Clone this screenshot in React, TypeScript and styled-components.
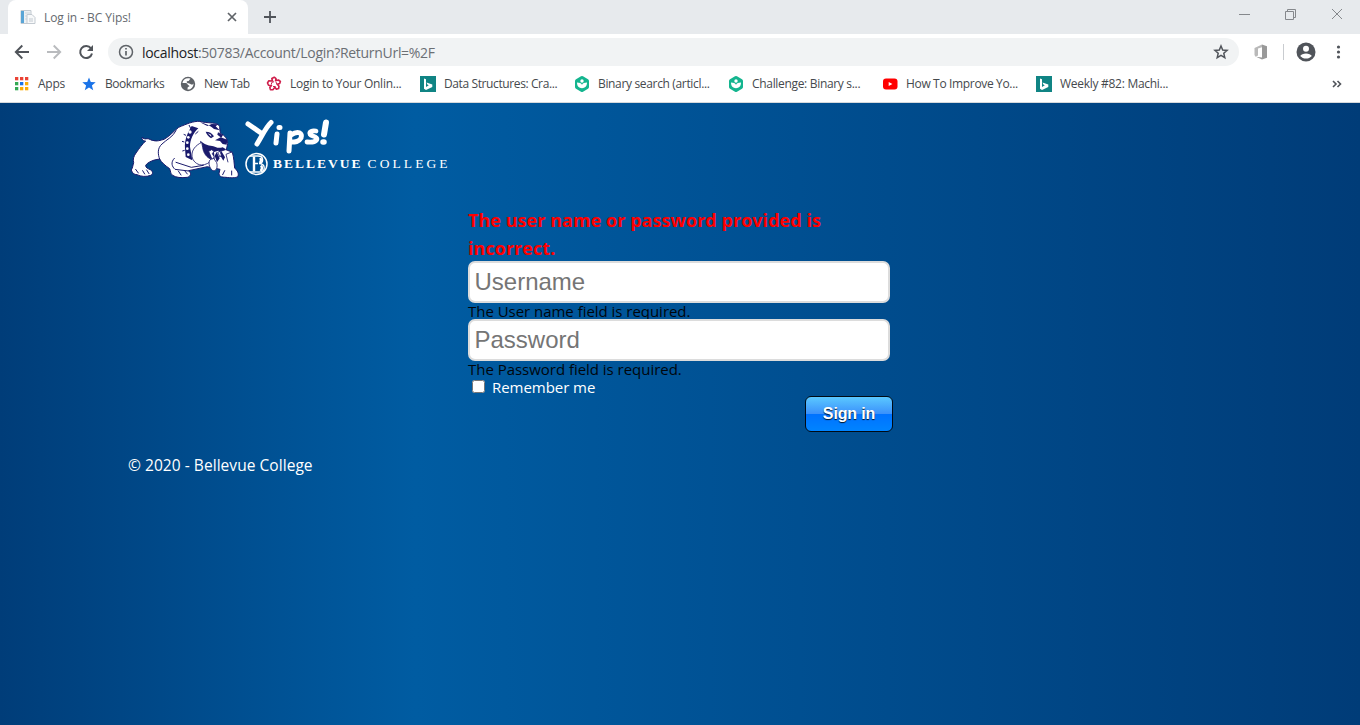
import React from 'react';
import styled, { createGlobalStyle } from 'styled-components';

const ui = '"Open Sans", "Noto Sans", sans-serif';

const Global = createGlobalStyle`
  * { box-sizing: border-box; }
  html, body { margin: 0; padding: 0; }
  body { overflow: hidden; font-family: ${ui}; }
`;

const Window = styled.div`
  display: flex;
  flex-direction: column;
  width: 1360px;
  height: 725px;
  overflow: hidden;
  background: #fff;
`;

const Label = styled.span<{ $ls?: number }>`
  letter-spacing: ${(p) => p.$ls ?? 0}px;
  white-space: nowrap;
`;

const TabStrip = styled.div`
  display: flex;
  height: 34px;
  flex: none;
  background: #e7eaed;
  padding-left: 8px;
`;

const Tab = styled.div`
  display: flex;
  align-items: center;
  width: 240px;
  height: 34px;
  padding: 0 10px 0 12px;
  background: #fff;
  border-radius: 8px 8px 0 0;
  color: #65696e;
  font-size: 12px;
  & > span { flex: 1; margin-left: 8px; }
`;

const NewTab = styled.div`
  display: flex;
  align-items: center;
  margin-left: 15px;
`;

const WindowButtons = styled.div`
  display: flex;
  gap: 35px;
  height: 28px;
  align-items: center;
  margin-left: auto;
  padding-right: 17px;
`;

const Toolbar = styled.div`
  display: flex;
  align-items: center;
  height: 36px;
  flex: none;
  padding: 0 0 0 14px;
`;

const NavButtons = styled.div`
  display: flex;
  gap: 16px;
  width: 94px;
`;

const Address = styled.div`
  display: flex;
  align-items: center;
  width: 1131px;
  height: 28px;
  padding: 0 10px;
  border-radius: 14px;
  background: #f1f3f4;
  color: #6b6f74;
  font-size: 14px;
  & > span { flex: 1; margin-left: 8px; }
  b { font-weight: 400; color: #202124; }
`;

const Actions = styled.div`
  display: flex;
  align-items: center;
  margin-left: 14px;
`;

const Divider = styled.div`
  width: 1px;
  height: 16px;
  margin: 0 12px 0 14px;
  background: #c9ccd0;
`;

const Bookmarks = styled.div`
  display: flex;
  align-items: center;
  height: 33px;
  flex: none;
  padding: 0 18px 5px 13px;
  border-bottom: 1px solid #d6d9dc;
  color: #45494d;
  font-size: 12px;
`;

const Bookmark = styled.div<{ $w: number }>`
  display: flex;
  align-items: center;
  gap: 8px;
  width: ${(p) => p.$w}px;
  flex: none;
  svg { flex: none; }
`;

const More = styled.div`
  display: flex;
  margin-left: auto;
`;

const Page = styled.main`
  flex: 1;
  padding: 15px 128px 0;
  background: linear-gradient(to right, #003d79 0%, #005ca2 30.5%, #003c78 100%);
  color: #fff;
  font-size: 16px;
`;

const Brand = styled.header`
  display: flex;
  height: 91px;
`;

const BrandText = styled.div`
  display: flex;
  flex-direction: column;
  margin-left: 4px;
`;

const College = styled.div`
  display: flex;
  align-items: center;
  gap: 5px;
  height: 24px;
  margin-top: -2px;
  font-family: "Liberation Serif", serif;
  font-size: 13.5px;
  line-height: 22px;
  span { margin-top: -1px; }
`;

const Form = styled.form`
  width: 425px;
  margin-left: 340px;
  display: flex;
  flex-direction: column;
`;

const ErrorTitle = styled.h3`
  margin: -3px 0 0;
  height: 55px;
  color: #f00;
  font-size: 18px;
  letter-spacing: 0.04px;
  font-weight: 700;
  line-height: 28px;
`;

const Field = styled.input`
  width: 422px;
  height: 42px;
  padding: 0 4.5px;
  border: 2px solid #dcdcdc;
  border-radius: 7px;
  background: #fff;
  font: 24px "Liberation Sans", sans-serif;
  outline: none;
  &::placeholder { color: #757575; opacity: 1; }
`;

const Validation = styled.div`
  height: 16px;
  color: #00060c;
  font-size: 15px;
  letter-spacing: -0.03px;
  line-height: 17px;
`;

const Remember = styled.label`
  display: flex;
  align-items: center;
  height: 19px;
  font-size: 15px;
  input { width: 13px; height: 13px; margin: 1px 7px 2px 4px; }
`;

const SignIn = styled.button`
  align-self: flex-end;
  width: 88px;
  height: 36px;
  padding: 0;
  border: 1px solid #000a14;
  border-radius: 6px;
  background: linear-gradient(#5bc8ff 0%, #3a90fb 50%, #0072ff 50%, #0084ff 100%);
  color: #fff;
  font: bold 16px/34px "Liberation Sans", sans-serif;
  letter-spacing: -0.15px;
  text-shadow: 0 1px 1px #012;
`;

const Footer = styled.footer`
  margin-top: 21px;
  font-size: 15.5px;
  letter-spacing: 0.05px;
  line-height: 25px;
`;

const Bing = () => (
  <svg width="16" height="16" viewBox="0 0 16 16">
    <path fill="#108484" d="M0 0h16v16H0z" />
    <path fill="#fff" d="M4 2.500l2 .8v7.600l2.800-1.600-1.500-.7-.8-2 5.800 2v2.300L6 14l-2-1.200z" />
  </svg>
);

const Khan = () => (
  <svg width="16" height="16" viewBox="0 0 16 16">
    <path fill="#14b58f" d="M7 .3a2 2 0 0 1 2 0l5 2.900a2 2 0 0 1 1 1.700v6.200a2 2 0 0 1-1 1.700l-5 2.900a2 2 0 0 1-2 0l-5-2.900a2 2 0 0 1-1-1.700V4.900a2 2 0 0 1 1-1.700z" />
    <circle cx="8" cy="5" r="1.700" fill="#fff" />
    <path fill="#fff" d="M3 6.500c2.600 0 4.300.8 5 2.300 .7-1.500 2.400-2.300 5-2.300 0 3.600-2 5.700-5 5.700S3 10.100 3 6.500z" />
  </svg>
);

const AppsIcon = () => (
  <svg width="17" height="14" viewBox="0 0 17 14">
    {['#ea4335', '#ea4335', '#ea4335', '#34a853', '#1a73e8', '#fbac05', '#34a853', '#fbac05', '#fbac05'].map((c, i) => (
      <rect key={i} x={2 + (i % 3) * 5} y={Math.floor(i / 3) * 5} width="3.300" height="3.300" fill={c} />
    ))}
  </svg>
);

const StarIcon = () => (
  <svg width="16" height="16" viewBox="0 0 16 16">
    <path fill="#1a73e8" d="M8 1.500l1.800 4.500 4.900.3-3.800 3.100 1.300 4.800L8 11.600l-4.200 2.600 1.300-4.800L1.300 6.300 6.200 6z" />
  </svg>
);

const Globe = () => (
  <svg width="16" height="16" viewBox="0 0 16 16">
    <circle cx="8" cy="8" r="7.200" fill="#5f6368" />
    <path fill="#fff" d="M13.500 7.200c-.4 1.300-1.500 1.500-2.500 1.400-.5-.8-1.600-1.300-2.600-1.400-1.400 0-2.100-.8-1.500-1.900l1.800-.4c.5-.8 1.200-1.400 1.800-2.100C6.600 1.200 3 3.500 2.400 7h3.200c1.500 0 2 1 2.300 1.900 1.100.1 1.600.8 1.400 1.600l-1.500.6-.4 2.500c3.700.2 6.300-2.900 6.100-6.400z" />
  </svg>
);

const Blossom = () => (
  <svg width="16" height="16" viewBox="0 0 16 16" fill="none" stroke="#cf1f4b" strokeWidth="1.600" strokeLinejoin="round">
    <path d="M6.500 5L5.800 2.500 8.300 1.200 10 2.600 9.600 4.800l2.800-.8 2 1.500-.7 2-2.400.7 1.700 2-.4 2.300-2.200.7-1.500-2-2 2.500-2.500-.1-.6-2.200 1.700-1.900-3-.3L1.500 7l1.200-2.200z" />
    <path d="M5.500 6.500l2.500-.8M10 6l1 2.500M9.500 10.500H7M5.500 8.500V7" strokeWidth="1" />
  </svg>
);

const YouTube = () => (
  <svg width="16" height="16" viewBox="0 0 16 16">
    <rect x="1" y="2.500" width="14.500" height="11" rx="3" fill="#f00" />
    <path d="M6.700 5.900v4.200L10.400 8z" fill="#fff" />
  </svg>
);

const Bulldog = () => (
  <svg width="113" height="64" viewBox="24 24 339 192">
    <g fill="#fff" stroke="#1a1a6c" strokeWidth="3" strokeLinejoin="round" strokeLinecap="round">
      <path d="M102 92C95 93 88 85 81 86 76 88 68 86 67 81 64 88 70 93 77 93 67 102 58 115 48 129 41 139 38 148 41 158 38 168 38 174 34 180 37 190 43 194 51 194 62 200 80 201 92 196 101 192 98 183 91 179 84 176 77 174 77 166 82 158 92 154 103 150L119 147C124 157 136 167 149 176 153 184 150 190 158 196 168 203 184 204 202 202 214 198 214 189 206 182L262 170 300 178 297 190C299 203 307 201 318 202 331 204 348 204 353 200 358 190 352 182 344 174 342 158 342 144 337 127L319 120 323 100C323 88 315 76 301 70L299 53C300 43 285 39 274 39 260 37 250 38 240 34 219 33 200 42 176 52 158 67 147 80 132 88 121 91 110 95 102 92z" />
      <path d="M168 62C160 80 138 90 126 102 112 114 113 132 119 147M163 145C151 157 156 170 165 178L206 183M168 157L214 172 250 166" fill="none" />
      <path d="M68 182l6 10M80 180l7 11M175 183l8 12M193 181l9 11M314 182l-6 12M335 183v12M47 178l8 11" fill="none" />
    </g>
    <g fill="#1a1a6c">
      <path d="M215 48C203 68 193 90 195 115L197 141 217 151 210 110C210 90 220 68 235 55z" />
      <path d="M240 37C258 41 274 49 282 57L299 61 287 49 295 43 275 42 262 48zM257 65C269 65 275 69 282 79L273 85C266 79 260 74 257 65zM294 67l15 8-5 8-12-9z" />
      <path d="M285 91l17-9 20 7-2 15-12-2-8-9z" />
      <path d="M240 92C251 99 257 105 272 107 288 109 292 117 308 112L318 118 305 127 295 122 282 126 284 148 274 158C263 146 252 135 248 117 240 110 243 101 240 92z" />
      <path d="M290 126l9 19-8 12-7-20zM307 122l10 15-7 15-12-20z" />
    </g>
    <g fill="#fff" stroke="#1a1a6c" strokeWidth="2.500">
      <path d="M245 97C227 106 214 120 216 139 218 153 230 164 244 165 258 165 270 158 275 148 261 144 250 130 248 112z" />
      <path d="M273 147C262 154 268 174 277 181 289 187 294 170 290 158L281 145z" />
      <path d="M266 124l9-5 7 5-5 7 6 10-7 7zM293 127l7-3 4 11-4 6zM304 123l13-4 18 7-17 7 6 24" />
    </g>
    <path d="M263 70l10 4 1 6z" fill="#fff" />
    <g fill="#fff">
      <circle cx="210" cy="66" r="5" /><circle cx="205" cy="82" r="4" /><circle cx="202" cy="98" r="4" /><circle cx="202" cy="116" r="4" /><circle cx="205" cy="134" r="4" />
    </g>
    <path d="M213 57l-6-12M198 76l-7-3M193 96l-7-2M194 121l-7 2M226 72l9-8" stroke="#1a1a6c" strokeWidth="3" />
  </svg>
);

const YipsMark = () => (
  <svg width="96" height="36" viewBox="0 0 96 36" fill="none" stroke="#fff" strokeLinecap="round" strokeLinejoin="round" strokeWidth="5">
    <path strokeWidth="5" d="M3 6l13 9M26 4.500C21 9 17 18 12 26" />
    <path d="M32 16l-1 9M34 9.500h1" />
    <path strokeWidth="5" d="M45 15l-1 18M46 17c7-5 12-2 10 3-2 4-6 4-10 4" />
    <path strokeWidth="4.800" d="M71 13c-6-1-9 3-3 5 7 2 4 7-6 6" />
    <path strokeWidth="6" d="M81 4.500l-2 12" />
    <path strokeWidth="5.500" d="M78 24h1" />
  </svg>
);

const Seal = () => (
  <svg width="23" height="24" viewBox="0 0 23 24" fill="none" stroke="#fff">
    <circle cx="11.500" cy="12" r="10.500" strokeWidth="1.500" />
    <path strokeWidth="1.300" d="M5 4h8c6 0 6 7 1 7.500 7 .5 7 8.500 0 8.500H5M9 11.500h4" />
    <path strokeWidth="2.400" d="M9 4.500v15M15.300 6c1 2 .5 4-.8 5M16 13.500c1.500 2 1 4-.5 5.500" />
  </svg>
);

const bookmarks: { w: number; ls: number; text: string; icon: React.ReactNode }[] = [
  { w: 68, ls: -0.25, text: 'Apps', icon: <AppsIcon /> },
  { w: 99, ls: -0.45, text: 'Bookmarks', icon: <StarIcon /> },
  { w: 86, ls: -0.45, text: 'New Tab', icon: <Globe /> },
  { w: 154, ls: -0.25, text: 'Login to Your Onlin...', icon: <Blossom /> },
  { w: 154, ls: -0.39, text: 'Data Structures: Cra...', icon: <Bing /> },
  { w: 154, ls: -0.34, text: 'Binary search (articl...', icon: <Khan /> },
  { w: 154, ls: -0.32, text: 'Challenge: Binary s...', icon: <Khan /> },
  { w: 154, ls: -0.34, text: 'How To Improve Yo...', icon: <YouTube /> },
  { w: 154, ls: -0.28, text: 'Weekly #82: Machi...', icon: <Bing /> },
];

export default function App() {
  return (
    <Window>
      <Global />
      <TabStrip>
        <Tab>
          <svg width="16" height="16" viewBox="0 0 16 16">
            <path fill="#eef1f4" stroke="#c3cad1" d="M1 1.500h10v13H1z" />
            <path fill="#5aa5d6" d="M1 2h3v12H1z" />
            <path stroke="#cfd6dc" d="M5 4h5M5 7h2M5 10h2" />
            <path fill="#f8f9fa" stroke="#c3cad1" d="M7 5.500h5l3 3v6H7zM9 10h4M9 12h4" />
          </svg>
          <Label $ls={-0.06}>Log in - BC Yips!</Label>
          <svg width="12" height="12" viewBox="0 0 12 12" stroke="#5f6368" strokeWidth="1.700"><path d="M2 2l8 8M10 2l-8 8" /></svg>
        </Tab>
        <NewTab>
          <svg width="14" height="14" viewBox="0 0 14 14" stroke="#50545a" strokeWidth="1.800"><path d="M7 1v12M1 7h12" /></svg>
        </NewTab>
        <WindowButtons>
          <svg width="11" height="11" viewBox="0 0 11 11" stroke="#85888c"><path d="M0 5.500h11" /></svg>
          <svg width="11" height="11" viewBox="0 0 11 11" stroke="#85888c" fill="none"><path d="M.5 2.500h8v8h-8zM2.500 2.500v-2h8v8h-2" /></svg>
          <svg width="12" height="12" viewBox="0 0 12 12" stroke="#85888c"><path d="M1 1l10 10M11 1L1 11" /></svg>
        </WindowButtons>
      </TabStrip>
      <Toolbar>
        <NavButtons>
          <svg width="16" height="16" viewBox="0 0 16 16" fill="none" stroke="#50545a" strokeWidth="1.900"><path d="M15 8H2M8.300 1.500L1.800 8l6.500 6.500" /></svg>
          <svg width="16" height="16" viewBox="0 0 16 16" fill="none" stroke="#b9bbbe" strokeWidth="1.900"><path d="M1 8h13M7.700 1.500L14.200 8l-6.500 6.500" /></svg>
          <svg width="16" height="16" viewBox="0 0 16 16"><path fill="none" stroke="#50545a" strokeWidth="2" d="M13 4.400A6 6 0 1 0 14 9.500" /><path fill="#50545a" d="M15 1v6H9z" /></svg>
        </NavButtons>
        <Address>
          <svg width="16" height="16" viewBox="0 0 16 16" fill="none" stroke="#5f6368" strokeWidth="1.500"><circle cx="8" cy="8" r="6.500" /><path d="M8 7v4.500M8 4v1.500" strokeWidth="1.700" /></svg>
          <Label $ls={-0.3}><b>localhost</b>:50783/Account/Login?ReturnUrl=%2F</Label>
          <svg width="16" height="16" viewBox="0 0 16 16" fill="none" stroke="#50545a" strokeWidth="1.500"><path d="M8 2l1.700 4 4.400.4-3.300 2.900 1 4.300L8 11.300l-3.800 2.300 1-4.300-3.300-2.900L6.300 6z" /></svg>
        </Address>
        <Actions>
          <svg width="16" height="16" viewBox="0 0 16 16">
            <path fill="#b9b9b9" d="M1.500 4L9 .5v2.800L5 4.500v7l-2.500 1.300-1-1.800z" />
            <path fill="#999" d="M9 .5l5 1.700v11.600l-5 1.700-6-2.700 6 .7z" />
          </svg>
          <Divider />
          <svg width="20" height="20" viewBox="0 0 20 20"><circle cx="10" cy="10" r="9.500" fill="#50545a" /><circle cx="10" cy="6.800" r="3" fill="#fff" /><path fill="#fff" d="M4.200 14c1.600-3.400 10-3.400 11.600 0-3 3.400-8.600 3.400-11.600 0z" /></svg>
          <svg width="44" height="16" viewBox="0 0 44 16" fill="#50545a"><circle cx="22.500" cy="3" r="1.600" /><circle cx="22.500" cy="8" r="1.600" /><circle cx="22.500" cy="13" r="1.600" /></svg>
        </Actions>
      </Toolbar>
      <Bookmarks>
        {bookmarks.map((b) => (
          <Bookmark key={b.text} $w={b.w}>{b.icon}<Label $ls={b.ls}>{b.text}</Label></Bookmark>
        ))}
        <More><svg width="10" height="8" viewBox="0 0 10 8" fill="none" stroke="#50545a" strokeWidth="1.600"><path d="M1 1l3 3-3 3M5.500 1l3 3-3 3" /></svg></More>
      </Bookmarks>
      <Page>
        <Brand>
          <Bulldog />
          <BrandText>
            <YipsMark />
            <College><Seal /><Label $ls={2}><b>BELLEVUE</b></Label><Label $ls={3.1}>COLLEGE</Label></College>
          </BrandText>
        </Brand>
        <Form>
          <ErrorTitle>The user name or password provided is incorrect.</ErrorTitle>
          <Field placeholder="Username" />
          <Validation>The User name field is required.</Validation>
          <Field type="password" placeholder="Password" />
          <Validation>The Password field is required.</Validation>
          <Remember><input type="checkbox" /><Label $ls={-0.05}>Remember me</Label></Remember>
          <SignIn type="button">Sign in</SignIn>
        </Form>
        <Footer>© 2020 - Bellevue College</Footer>
      </Page>
    </Window>
  );
}
